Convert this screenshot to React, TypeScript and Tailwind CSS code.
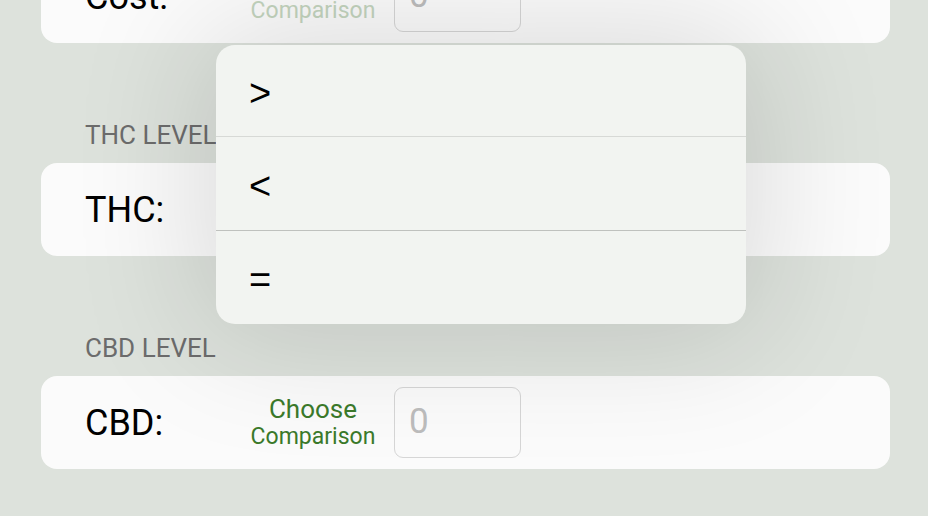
import React from "react";

function Row({ label, faded }: { label: string; faded?: boolean }) {
  return (
    <div className="h-[93px] rounded-[16px] bg-[#fbfbfb] flex items-center pl-[44px]">
      <div className="w-[165px] text-[36px] leading-[40px] text-black">{label}</div>
      <div
        className={
          "w-[126px] flex flex-col items-center " +
          (faded ? "text-[#c3d4be]" : "text-[#3b7a2b]")
        }
      >
        <div className="text-[26px] leading-[28px]">Choose</div>
        <div className="text-[23px] leading-[28px]">Comparison</div>
      </div>
      <div className="ml-[18px] w-[127px] h-[71px] rounded-[9px] border border-[#d6d6d6] flex items-center pl-[14px] text-[35px] text-[#bdbdbd]">
        0
      </div>
    </div>
  );
}

function Header({ text }: { text: string }) {
  return (
    <div className="pt-[77px] pb-[13px] pl-[44px] text-[26px] leading-[30px] text-[#6c6c6c]">
      {text}
    </div>
  );
}

const glyph =
  "flex items-center pl-[33px] pt-[6px] text-[38px] text-black font-['Liberation_Sans',sans-serif]";

export default function App() {
  return (
    <div
      className="relative w-[928px] h-[516px] overflow-hidden bg-[#dde2dc]"
      style={{ fontFamily: "Roboto, 'Liberation Sans', sans-serif" }}
    >
      <div className="ml-[41px] mr-[38px] mt-[-50px]">
        <Row label="Cost:" faded />
        <Header text="THC LEVEL" />
        <Row label="THC:" />
        <Header text="CBD LEVEL" />
        <Row label="CBD:" />
      </div>

      <div className="absolute left-[216px] top-[45px] w-[530px] h-[279px] rounded-[19px] bg-[#f2f4f1] shadow-[0_0_130px_15px_rgba(0,0,0,0.13)] flex flex-col overflow-hidden">
        <div className={"h-[92px] border-b border-[#d7d9d6] " + glyph}>&gt;</div>
        <div className={"h-[94px] border-b border-[#bfc1be] " + glyph}>&lt;</div>
        <div className={"flex-1 " + glyph}>=</div>
      </div>
    </div>
  );
}
